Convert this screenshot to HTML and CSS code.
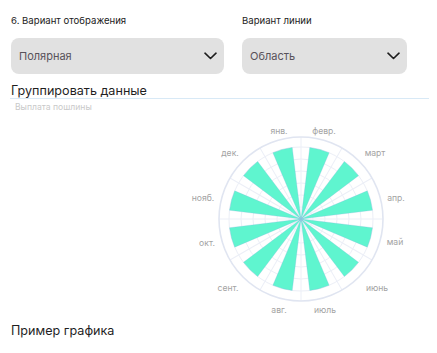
FILE: index.html
```html
<!DOCTYPE html>
<html lang="ru">
<head>
<meta charset="utf-8">
<link rel="stylesheet" href="styles.css">
</head>
<body>
<div class="page">
  <div class="row">
    <div class="field field-wide">
      <div class="label">6. Вариант отображения</div>
      <div class="select"><span>Полярная</span>
        <svg class="chev" width="13" height="8" viewBox="0 0 13 8"><path d="M1 1.2 L6.5 6.5 L12 1.2" fill="none" stroke="#1e1e1e" stroke-width="1.6" stroke-linecap="round" stroke-linejoin="round"/></svg>
      </div>
    </div>
    <div class="field field-narrow">
      <div class="label">Вариант линии</div>
      <div class="select"><span>Область</span>
        <svg class="chev" width="13" height="8" viewBox="0 0 13 8"><path d="M1 1.2 L6.5 6.5 L12 1.2" fill="none" stroke="#1e1e1e" stroke-width="1.6" stroke-linecap="round" stroke-linejoin="round"/></svg>
      </div>
    </div>
  </div>
  <div class="group-title">Группировать данные</div>
  <div class="chart-title">Выплата пошлины</div>
  <svg class="chart" width="437" height="208" viewBox="0 114 437 208">
    <defs>
      <path id="w" d="M0 0 L-10.02 -71.3 A72 72 0 0 1 10.02 -71.3 Z"/>
    </defs>
    <g fill="none" stroke="#eceff7" stroke-width="1">
      <circle cx="301" cy="220" r="12"/>
      <circle cx="301" cy="220" r="24"/>
      <circle cx="301" cy="220" r="36"/>
      <circle cx="301" cy="220" r="48"/>
      <circle cx="301" cy="220" r="60"/>
      <circle cx="301" cy="220" r="72"/>
    </g>
    <g stroke="#eceff7" stroke-width="1" transform="translate(301 220)">
      <line x1="0" y1="0" x2="0" y2="-82"/>
      <line x1="0" y1="0" x2="0" y2="-82" transform="rotate(30)"/>
      <line x1="0" y1="0" x2="0" y2="-82" transform="rotate(60)"/>
      <line x1="0" y1="0" x2="0" y2="-82" transform="rotate(90)"/>
      <line x1="0" y1="0" x2="0" y2="-82" transform="rotate(120)"/>
      <line x1="0" y1="0" x2="0" y2="-82" transform="rotate(150)"/>
      <line x1="0" y1="0" x2="0" y2="-82" transform="rotate(180)"/>
      <line x1="0" y1="0" x2="0" y2="-82" transform="rotate(210)"/>
      <line x1="0" y1="0" x2="0" y2="-82" transform="rotate(240)"/>
      <line x1="0" y1="0" x2="0" y2="-82" transform="rotate(270)"/>
      <line x1="0" y1="0" x2="0" y2="-82" transform="rotate(300)"/>
      <line x1="0" y1="0" x2="0" y2="-82" transform="rotate(330)"/>
    </g>
    <circle cx="301" cy="220" r="82" fill="none" stroke="#e0e5f1" stroke-width="1.6"/>
    <g fill="#5ff5cf" stroke="#7fb3dc" stroke-width="0.4" stroke-opacity="0.6">
      <use href="#w" transform="translate(301 220) rotate(15)"/>
      <use href="#w" transform="translate(301 220) rotate(45)"/>
      <use href="#w" transform="translate(301 220) rotate(75)"/>
      <use href="#w" transform="translate(301 220) rotate(105)"/>
      <use href="#w" transform="translate(301 220) rotate(135)"/>
      <use href="#w" transform="translate(301 220) rotate(165)"/>
      <use href="#w" transform="translate(301 220) rotate(195)"/>
      <use href="#w" transform="translate(301 220) rotate(225)"/>
      <use href="#w" transform="translate(301 220) rotate(255)"/>
      <use href="#w" transform="translate(301 220) rotate(285)"/>
      <use href="#w" transform="translate(301 220) rotate(315)"/>
      <use href="#w" transform="translate(301 220) rotate(345)"/>
    </g>
    <circle cx="301" cy="220" r="2.5" fill="#8cc6e0" opacity="0.7"/>
    <g class="axis-label" text-anchor="middle" dominant-baseline="central">
      <text x="279" y="132">янв.</text>
      <text x="324" y="132">февр.</text>
      <text x="375" y="154">март</text>
      <text x="396" y="199">апр.</text>
      <text x="395" y="243">май</text>
      <text x="377" y="289">июнь</text>
      <text x="325" y="311">июль</text>
      <text x="279" y="311">авг.</text>
      <text x="228" y="289">сент.</text>
      <text x="207" y="244">окт.</text>
      <text x="203" y="199">нояб.</text>
      <text x="230" y="154">дек.</text>
    </g>
  </svg>
  <div class="example-title">Пример графика</div>
</div>
</body>
</html>
```
FILE: styles.css
```css
html, body {
  margin: 0;
  padding: 0;
  background: #ffffff;
}
body {
  font-family: Inter, "Noto Sans", "Liberation Sans", sans-serif;
  color: #1f1f1f;
}
.page {
  width: 437px;
  height: 353px;
  padding-top: 14px;
  box-sizing: border-box;
  overflow: hidden;
}
.row {
  display: flex;
  gap: 18px;
  padding-left: 11px;
}
.field-wide {
  width: 213px;
}
.field-narrow {
  width: 165px;
}
.label {
  font-size: 9.6px;
  line-height: 14px;
  height: 14px;
  color: #222;
  margin-bottom: 10px;
  white-space: nowrap;
}
.select {
  height: 36px;
  border-radius: 8px;
  background: #e1e1e1;
  display: flex;
  align-items: center;
  justify-content: space-between;
  padding: 0 7px 0 8px;
  box-sizing: border-box;
  font-size: 11px;
  color: #58525a;
}
.chev {
  display: block;
}
.group-title {
  margin: 9px 8px 0 10px;
  font-size: 12.6px;
  line-height: 15px;
  color: #1f1f1f;
  border-bottom: 1px solid #d8e9f6;
  padding-left: 1px;
}
.chart-title {
  margin: 3px 0 0 15px;
  font-size: 8.6px;
  line-height: 11px;
  color: #c9c9c9;
}
.chart {
  display: block;
  margin-top: 0;
}
.axis-label {
  font-size: 8.6px;
  fill: #a3a3a3;
  font-family: Inter, "Noto Sans", sans-serif;
}
.example-title {
  margin: 2px 0 0 11px;
  font-size: 12.6px;
  line-height: 16px;
  color: #1f1f1f;
}
```
